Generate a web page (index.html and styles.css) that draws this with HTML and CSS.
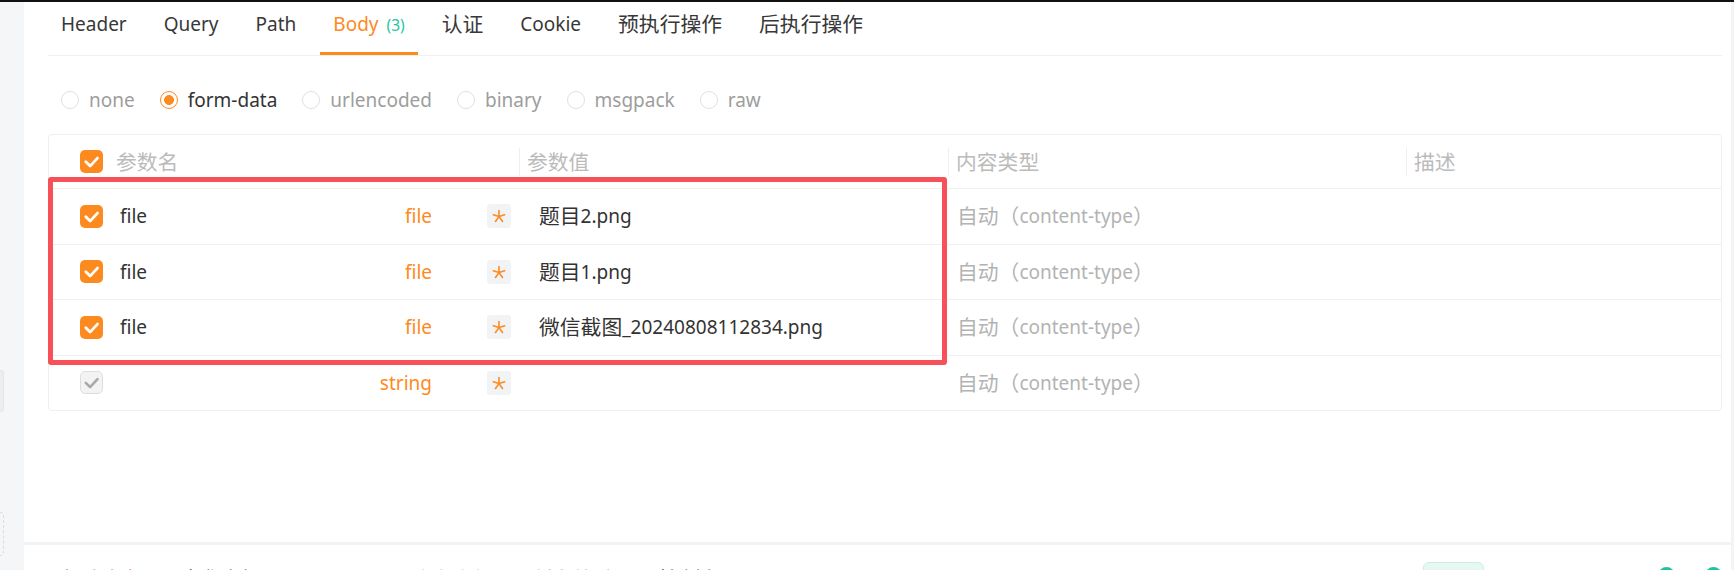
FILE: index.html
```html
<!DOCTYPE html>
<html lang="zh-CN">
<head>
<meta charset="utf-8">
<title>Body</title>
<link rel="stylesheet" href="styles.css">
</head>
<body>
<div class="topline"></div>
<div class="app">
  <aside class="side">
    <div class="side-tab"></div>
    <div class="side-dash"></div>
  </aside>
  <main class="main">
    <section class="panel">
      <nav class="tabs">
        <div class="tab">Header</div>
        <div class="tab">Query</div>
        <div class="tab">Path</div>
        <div class="tab active">Body<span class="count">(3)</span></div>
        <div class="tab"><span class="zh">认证</span></div>
        <div class="tab">Cookie</div>
        <div class="tab"><span class="zh">预执行操作</span></div>
        <div class="tab"><span class="zh">后执行操作</span></div>
      </nav>
      <div class="radios">
        <label class="radio"><span class="dot"></span>none</label>
        <label class="radio on"><span class="dot"></span>form-data</label>
        <label class="radio"><span class="dot"></span>urlencoded</label>
        <label class="radio"><span class="dot"></span>binary</label>
        <label class="radio"><span class="dot"></span>msgpack</label>
        <label class="radio"><span class="dot"></span>raw</label>
      </div>
      <div class="table">
        <div class="row head">
          <div class="cell c-name">
            <svg class="cb" viewBox="0 0 23 23"><rect width="23" height="23" rx="5" fill="#fd8a1e"/><path d="M5.8 11.8l4.3 4.3 7.4-8" fill="none" stroke="#fff" stroke-width="2.8" stroke-linecap="round" stroke-linejoin="round"/></svg>
            <span class="zh htext">参数名</span>
          </div>
          <div class="cell hcell"><i class="vdiv"></i><span class="zh">参数值</span></div>
          <div class="cell hcell"><i class="vdiv"></i><span class="zh">内容类型</span></div>
          <div class="cell hcell"><i class="vdiv"></i><span class="zh">描述</span></div>
        </div>
        <div class="row">
          <div class="cell c-name">
            <svg class="cb" viewBox="0 0 23 23"><rect width="23" height="23" rx="5" fill="#fd8a1e"/><path d="M5.8 11.8l4.3 4.3 7.4-8" fill="none" stroke="#fff" stroke-width="2.8" stroke-linecap="round" stroke-linejoin="round"/></svg>
            <span class="name">file</span>
            <span class="type">file</span>
            <span class="star"><svg viewBox="0 0 24 24"><path d="M12 12.6V6.6M12 12.6l5.7-1.85M12 12.6l-5.7-1.85M12 12.6l3.53 4.85M12 12.6l-3.53 4.85" fill="none" stroke="#fd8a1e" stroke-width="1.6" stroke-linecap="round"/></svg></span>
          </div>
          <div class="cell c-val"><span class="zh">题目</span>2.png</div>
          <div class="cell c-type"><span class="zh">自动（</span>content-type<span class="zh">）</span></div>
          <div class="cell"></div>
        </div>
        <div class="row">
          <div class="cell c-name">
            <svg class="cb" viewBox="0 0 23 23"><rect width="23" height="23" rx="5" fill="#fd8a1e"/><path d="M5.8 11.8l4.3 4.3 7.4-8" fill="none" stroke="#fff" stroke-width="2.8" stroke-linecap="round" stroke-linejoin="round"/></svg>
            <span class="name">file</span>
            <span class="type">file</span>
            <span class="star"><svg viewBox="0 0 24 24"><path d="M12 12.6V6.6M12 12.6l5.7-1.85M12 12.6l-5.7-1.85M12 12.6l3.53 4.85M12 12.6l-3.53 4.85" fill="none" stroke="#fd8a1e" stroke-width="1.6" stroke-linecap="round"/></svg></span>
          </div>
          <div class="cell c-val"><span class="zh">题目</span>1.png</div>
          <div class="cell c-type"><span class="zh">自动（</span>content-type<span class="zh">）</span></div>
          <div class="cell"></div>
        </div>
        <div class="row">
          <div class="cell c-name">
            <svg class="cb" viewBox="0 0 23 23"><rect width="23" height="23" rx="5" fill="#fd8a1e"/><path d="M5.8 11.8l4.3 4.3 7.4-8" fill="none" stroke="#fff" stroke-width="2.8" stroke-linecap="round" stroke-linejoin="round"/></svg>
            <span class="name">file</span>
            <span class="type">file</span>
            <span class="star"><svg viewBox="0 0 24 24"><path d="M12 12.6V6.6M12 12.6l5.7-1.85M12 12.6l-5.7-1.85M12 12.6l3.53 4.85M12 12.6l-3.53 4.85" fill="none" stroke="#fd8a1e" stroke-width="1.6" stroke-linecap="round"/></svg></span>
          </div>
          <div class="cell c-val"><span class="zh">微信截图</span>_20240808112834.png</div>
          <div class="cell c-type"><span class="zh">自动（</span>content-type<span class="zh">）</span></div>
          <div class="cell"></div>
        </div>
        <div class="row">
          <div class="cell c-name">
            <svg class="cb" viewBox="0 0 23 23"><rect x="0.5" y="0.5" width="22" height="22" rx="4.5" fill="#f3f3f3" stroke="#dedede"/><path d="M5.8 11.8l4.3 4.3 7.4-8" fill="none" stroke="#a9a9a9" stroke-width="2.6" stroke-linecap="round" stroke-linejoin="round"/></svg>
            <span class="name"></span>
            <span class="type">string</span>
            <span class="star"><svg viewBox="0 0 24 24"><path d="M12 12.6V6.6M12 12.6l5.7-1.85M12 12.6l-5.7-1.85M12 12.6l3.53 4.85M12 12.6l-3.53 4.85" fill="none" stroke="#fd8a1e" stroke-width="1.6" stroke-linecap="round"/></svg></span>
          </div>
          <div class="cell c-val"></div>
          <div class="cell c-type"><span class="zh">自动（</span>content-type<span class="zh">）</span></div>
          <div class="cell"></div>
        </div>
        <div class="mark"></div>
      </div>
    </section>
    <div class="sep"></div>
    <div class="bottombar">
      <span class="zh bt b-red">实时响应</span>
      <span class="zh bt b-dark m2">请求头部</span>
      <span class="zh bt b-light m3">响应头部</span>
      <span class="zh bt b-orange m4">断言校验</span>
      <span class="zh bt b-dark m5">控制台</span>
      <span class="pill"></span>
      <span class="gdot"></span>
      <span class="gdot last"></span>
    </div>
  </main>
  <div class="scroll"></div>
</div>
</body>
</html>
```

FILE: styles.css
```css
* { box-sizing: border-box; }

html, body {
  margin: 0;
  padding: 0;
}

body {
  width: 1734px;
  height: 570px;
  overflow: hidden;
  background: #fff;
  font-family: "Noto Sans", "Noto Sans CJK SC", sans-serif;
  font-size: 19px;
  line-height: 26px;
  color: #333;
}

.zh { font-size: 20.8px; }

.topline {
  height: 2px;
  background: #111;
}

.app {
  display: flex;
  height: 568px;
}

/* left sidebar */
.side {
  width: 24px;
  flex: none;
  background: #f5f6f8;
  display: flex;
  flex-direction: column;
}

.side-tab {
  margin-top: 368px;
  width: 4px;
  height: 42px;
  background: #eceef1;
  border: 1px solid #e3e5e9;
  border-left: 0;
  border-radius: 0 4px 4px 0;
}

.side-dash {
  margin-top: 100px;
  width: 4px;
  height: 44px;
  border: 1px dashed #d9dce1;
  border-left: 0;
  border-radius: 0 4px 4px 0;
}

.main {
  flex: 1;
  min-width: 0;
  display: flex;
  flex-direction: column;
}

.panel {
  flex: none;
  height: 540px;
  padding: 0 9px 0 24px;
}

/* tabs */
.tabs {
  display: flex;
  gap: 11px;
  height: 54px;
  border-bottom: 1px solid #efefef;
}

.tab {
  height: 53px;
  padding: 9px 13px 0;
  border-bottom: 3px solid transparent;
  white-space: nowrap;
  color: #383838;
}

.tab.active {
  color: #fd8a1e;
  border-bottom-color: #fd8a1e;
}

.count {
  font-size: 15.5px;
  color: #22c79f;
  margin-left: 8px;
}

/* radios */
.radios {
  display: flex;
  gap: 25px;
  height: 78px;
  padding: 31px 0 0 13px;
}

.radio {
  display: flex;
  align-items: center;
  gap: 10px;
  color: #9d9d9d;
  height: 26px;
}

.radio.on { color: #333; }

.dot {
  width: 18px;
  height: 18px;
  border: 1px solid #dfe1e6;
  border-radius: 50%;
  background: #fff;
  flex: none;
}

.radio.on .dot {
  border-color: #fd8a1e;
  background: radial-gradient(circle at center, #fd8a1e 0 4.6px, #fff 5.2px);
}

/* table */
.table {
  position: relative;
  border: 1px solid #efefef;
  border-radius: 4px;
}

.row {
  display: grid;
  grid-template-columns: 470px 429px 458px 1fr;
  height: 55.5px;
  border-top: 1px solid #f0f0f0;
}

.row.head {
  height: 53px;
  border-top: 0;
  color: #bbb;
}

.cell {
  display: flex;
  align-items: center;
  min-width: 0;
  white-space: nowrap;
}

.c-name { padding: 0 8px 0 31px; }

.cb {
  width: 23px;
  height: 23px;
  flex: none;
}

.htext { margin-left: 13px; }

.name {
  margin-left: 17px;
  flex: 1;
}

.type {
  color: #fd8a1e;
  margin-right: 55px;
}

.star {
  width: 24px;
  height: 24px;
  flex: none;
  background: #f2f3f5;
  border-radius: 3px;
  display: flex;
}

.star svg {
  width: 24px;
  height: 24px;
}

.vdiv {
  width: 1px;
  height: 28px;
  background: #efefef;
  margin-right: 7px;
  flex: none;
}

.c-val { padding-left: 20px; }

.c-type {
  padding-left: 9px;
  color: #b3b3b3;
}

.mark {
  position: absolute;
  left: -1px;
  top: 42px;
  width: 899px;
  height: 188px;
  border: 5px solid #f85058;
  border-radius: 3px;
  pointer-events: none;
}

/* bottom */
.sep {
  height: 3px;
  background: #f2f3f5;
  flex: none;
}

.bottombar {
  flex: 1;
  display: flex;
  align-items: flex-start;
  padding: 21px 9px 0 33px;
}

.bt { white-space: nowrap; }
.b-red { color: #f5603d; }
.b-dark { color: #333; }
.b-light { color: #c8c8c8; }
.b-orange { color: #fd8a1e; }
.m2 { margin-left: 37px; }
.m3 { margin-left: 149px; }
.m4 { margin-left: 39px; }
.m5 { margin-left: 44px; }

.pill {
  margin: -4px 0 0 auto;
  width: 61px;
  height: 30px;
  background: #e7f8f3;
  border: 1px solid #c7efe3;
  border-radius: 6px;
}

.gdot {
  margin: 1px 0 0 174px;
  width: 17px;
  height: 17px;
  border-radius: 50%;
  background: #22c39a;
}

.gdot.last { margin-left: 30px; }

.scroll {
  width: 3px;
  flex: none;
  background: #f3f4f6;
}
```
